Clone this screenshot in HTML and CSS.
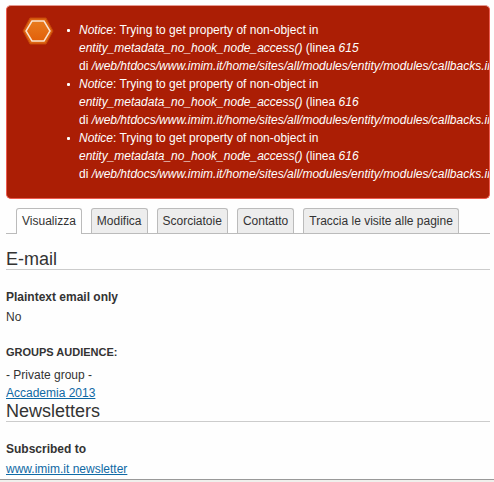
FILE: index.html
```html
<!DOCTYPE html>
<html lang="it">
<head>
<meta charset="UTF-8">
<meta name="viewport" content="width=device-width, initial-scale=1.0">
<title>Account</title>
<link rel="stylesheet" href="styles.css">
</head>
<body>
<main class="page">
    <div class="messages">
        <svg class="messages-icon" viewBox="0 0 32 28" aria-hidden="true">
            <defs>
                <linearGradient id="hex" x1="0" y1="0" x2="0" y2="1">
                    <stop offset="0" stop-color="#e87b1e"/>
                    <stop offset="1" stop-color="#e2600a"/>
                </linearGradient>
            </defs>
            <path d="M8 1H24L31 14L24 27H8L1 14Z" fill="#dd6412" stroke="#c54708" stroke-width="1"/>
            <path d="M10 4H22L28 14L22 24H10L4 14Z" fill="url(#hex)" stroke="#f9e3d0" stroke-width="1.500"/>
        </svg>
        <ul class="messages-list">
            <li><em>Notice</em>: Trying to get property of non-object in <em>entity_metadata_no_hook_node_access()</em> (linea <em>615</em> di&nbsp;<em>/web/htdocs/www.imim.it/home/sites/all/modules/entity/modules/callbacks.inc</em>).</li>
            <li><em>Notice</em>: Trying to get property of non-object in <em>entity_metadata_no_hook_node_access()</em> (linea <em>616</em> di&nbsp;<em>/web/htdocs/www.imim.it/home/sites/all/modules/entity/modules/callbacks.inc</em>).</li>
            <li><em>Notice</em>: Trying to get property of non-object in <em>entity_metadata_no_hook_node_access()</em> (linea <em>616</em> di&nbsp;<em>/web/htdocs/www.imim.it/home/sites/all/modules/entity/modules/callbacks.inc</em>).</li>
        </ul>
    </div>

    <nav class="tabs">
        <a class="tab active" href="#">Visualizza</a>
        <a class="tab" href="#">Modifica</a>
        <a class="tab" href="#">Scorciatoie</a>
        <a class="tab" href="#">Contatto</a>
        <a class="tab" href="#">Traccia le visite alle pagine</a>
    </nav>

    <section>
        <h3>E-mail</h3>
        <dl class="field">
            <dt>Plaintext email only</dt>
            <dd>No</dd>
        </dl>
        <dl class="field groups">
            <dt>GROUPS AUDIENCE:</dt>
            <dd>- Private group -</dd>
            <dd><a href="#">Accademia 2013</a></dd>
        </dl>
    </section>

    <section>
        <h3>Newsletters</h3>
        <dl class="field">
            <dt>Subscribed to</dt>
            <dd><a href="#">www.imim.it newsletter</a></dd>
        </dl>
    </section>
</main>
<footer class="footer"></footer>
</body>
</html>
```

FILE: styles.css
```css
body {
    display: flex;
    flex-direction: column;
    min-height: 100vh;
    margin: 0;
    background: #fefefe;
    color: #333;
    font-family: "Liberation Sans", Arial, sans-serif;
    font-size: 12px;
    line-height: 18px;
}
.page {
    padding: 5px 4px 1px 6px;
}
.messages {
    display: flex;
    gap: 19px;
    padding: 15px 0 15px 15px;
    border: 1px solid #ed5b4f;
    border-top-color: #e59a92;
    border-radius: 5px;
    background: #ab1e05;
    color: #fefefe;
    overflow: hidden;
}
.messages-icon {
    flex: none;
    width: 32px;
    height: 28px;
    margin-top: -4px;
}
.messages-list {
    flex: 1;
    min-width: 0;
    margin: 0;
    padding: 0 0 0 6px;
    list-style: none;
}
.messages-list li {
    position: relative;
    padding-right: 96px;
}
.messages-list li::before {
    content: "";
    position: absolute;
    left: -12px;
    top: 8px;
    width: 3px;
    height: 3px;
    border-radius: 1px;
    background: #fefefe;
}
.tabs {
    display: flex;
    gap: 9px;
    margin-top: 9px;
    padding: 0 10px;
    border-bottom: 1px solid #bbb;
}
.tab {
    padding: 3px 5px;
    border: 1px solid #bbb;
    border-bottom: 0;
    border-radius: 3px 3px 0 0;
    background: #ededed;
    color: #333;
    text-decoration: none;
    white-space: nowrap;
}
.tab.active {
    margin-bottom: -1px;
    padding-bottom: 4px;
    background: #fefefe;
}
h3 {
    margin: 0;
    border-bottom: 1px solid #ccc;
    font-size: 18px;
    font-weight: normal;
    line-height: 19px;
}
.tabs + section {
    margin-top: 16px;
}
.field {
    margin: 18px 0 0;
}
.field dt {
    margin-bottom: 2px;
    font-weight: bold;
}
.field dd {
    margin: 0;
}
.field a {
    color: #0f69a5;
}
.groups dt {
    margin-bottom: 6px;
    font-size: 11px;
    line-height: 16px;
}
.footer {
    flex: 1;
    border-top: 1px solid #999;
    background: #f0f0ec;
}
```
